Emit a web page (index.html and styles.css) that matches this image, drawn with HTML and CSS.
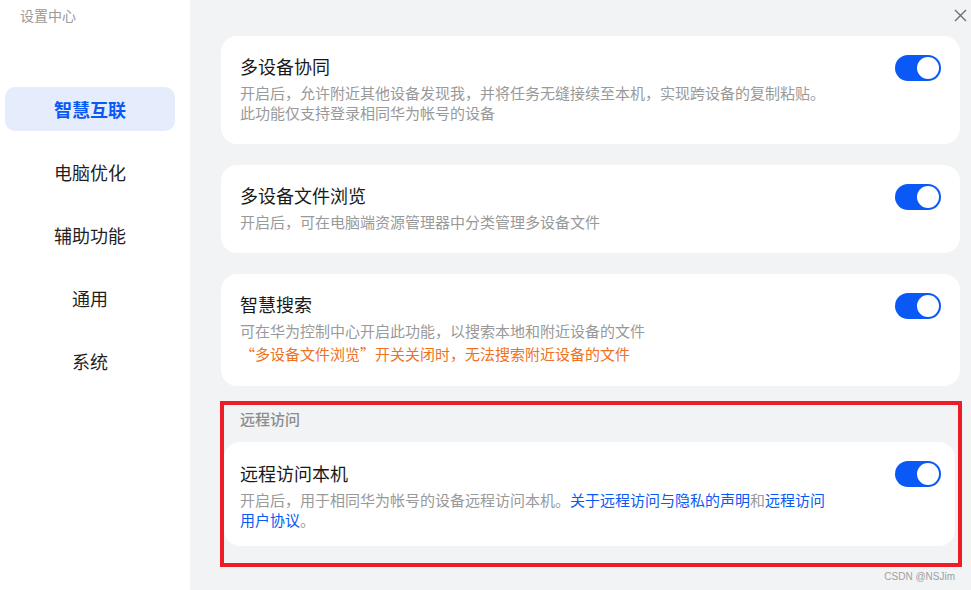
FILE: index.html
```html
<!DOCTYPE html>
<html lang="zh-CN">
<head>
<meta charset="utf-8">
<title>设置中心</title>
<link rel="stylesheet" href="styles.css">
</head>
<body>
<div class="app">
  <aside class="sidebar">
    <div class="app-title">设置中心</div>
    <nav class="nav">
      <div class="nav-item active">智慧互联</div>
      <div class="nav-item">电脑优化</div>
      <div class="nav-item">辅助功能</div>
      <div class="nav-item">通用</div>
      <div class="nav-item">系统</div>
    </nav>
  </aside>
  <main class="main">
    <div class="topbar">
      <svg class="close" width="13" height="13" viewBox="0 0 13 13"><path d="M1 1L12 12M12 1L1 12" stroke="#6b6b6b" stroke-width="1.3" fill="none"/></svg>
    </div>
    <div class="content">
      <section class="card">
        <div class="card-text">
          <div class="card-title">多设备协同</div>
          <div class="card-desc">开启后，允许附近其他设备发现我，并将任务无缝接续至本机，实现跨设备的复制粘贴。<br>此功能仅支持登录相同华为帐号的设备</div>
        </div>
        <div class="toggle"><span class="knob"></span></div>
      </section>
      <section class="card">
        <div class="card-text">
          <div class="card-title">多设备文件浏览</div>
          <div class="card-desc">开启后，可在电脑端资源管理器中分类管理多设备文件</div>
        </div>
        <div class="toggle"><span class="knob"></span></div>
      </section>
      <section class="card card-last">
        <div class="card-text">
          <div class="card-title">智慧搜索</div>
          <div class="card-desc">可在华为控制中心开启此功能，以搜索本地和附近设备的文件</div>
          <div class="card-warn">“多设备文件浏览”开关关闭时，无法搜索附近设备的文件</div>
        </div>
        <div class="toggle"><span class="knob"></span></div>
      </section>
      <div class="group">
        <div class="group-label">远程访问</div>
        <section class="card card-remote">
          <div class="card-text">
            <div class="card-title">远程访问本机</div>
            <div class="card-desc narrow">开启后，用于相同华为帐号的设备远程访问本机。<span class="link">关于远程访问与隐私的声明</span>和<span class="link">远程访问用户协议</span>。</div>
          </div>
          <div class="toggle"><span class="knob"></span></div>
        </section>
        <div class="highlight"></div>
      </div>
      <div class="watermark">CSDN @NSJim</div>
    </div>
  </main>
</div>
</body>
</html>
```

FILE: styles.css
```css
* { box-sizing: border-box; }
html, body { margin: 0; padding: 0; }
body {
  font-family: "Noto Sans CJK SC", "Noto Sans", sans-serif;
  background: #f1f3f5;
  color: #191919;
}
.app {
  display: flex;
  width: 971px;
  height: 590px;
  overflow: hidden;
}
.sidebar {
  width: 190px;
  flex: none;
  background: #ffffff;
  padding: 0 15px 0 5px;
}
.app-title {
  font-size: 14px;
  line-height: 20px;
  color: #9a9a9a;
  padding: 5px 0 0 15px;
}
.nav {
  margin-top: 62px;
  display: flex;
  flex-direction: column;
  gap: 19px;
}
.nav-item {
  height: 44px;
  line-height: 44px;
  text-align: center;
  font-size: 18px;
  color: #1f1f1f;
  border-radius: 10px;
}
.nav-item.active {
  background: #e5edfc;
  color: #0a59f7;
  font-weight: 700;
}
.main {
  flex: 1;
  display: flex;
  flex-direction: column;
}
.topbar {
  height: 36px;
  display: flex;
  justify-content: flex-end;
  align-items: flex-start;
  padding: 9px 4px 0 0;
}
.close { display: block; }
.content {
  padding: 0 11px 0 31px;
  display: flex;
  flex-direction: column;
}
.card {
  background: #ffffff;
  border-radius: 16px;
  padding: 18px 19px 21px 19px;
  display: flex;
  justify-content: space-between;
  align-items: flex-start;
  margin-bottom: 21px;
}
.card .toggle { margin-top: 1px; }
.card-last { margin-bottom: 0; padding-bottom: 22px; }
.card-title {
  font-size: 18px;
  line-height: 24px;
  color: #191919;
}
.card-desc {
  margin-top: 5px;
  font-size: 15px;
  line-height: 20px;
  color: #999999;
}
.card-desc.narrow { width: 596px; }
.card-warn {
  margin-top: 3px;
  font-size: 15px;
  line-height: 20px;
  color: #f0711f;
}
.link { color: #0a59f7; }
.toggle {
  width: 46px;
  height: 26px;
  border-radius: 13px;
  background: #0a59f7;
  padding: 2px;
  display: flex;
  justify-content: flex-end;
  flex: none;
}
.knob {
  width: 22px;
  height: 22px;
  border-radius: 50%;
  background: #ffffff;
}
.group {
  position: relative;
  margin-top: 15px;
  padding: 8px 0 21px 0;
}
.group-label {
  padding-left: 19px;
  font-size: 15px;
  line-height: 20px;
  font-weight: 500;
  color: #8c8c8c;
}
.card-remote {
  margin: 13px 5px 0 3px;
  padding: 19px 14px 16px 16px;
}
.card-remote .toggle { margin-top: 0; }
.highlight {
  position: absolute;
  left: -1px;
  right: -2px;
  top: 0;
  bottom: 0;
  border: 4px solid #ee1c25;
  pointer-events: none;
}
.watermark {
  margin-top: 4px;
  margin-right: 5px;
  text-align: right;
  font-family: "Liberation Sans", Arial, sans-serif;
  font-size: 10px;
  line-height: 12px;
  color: #a0a0a0;
}
```
